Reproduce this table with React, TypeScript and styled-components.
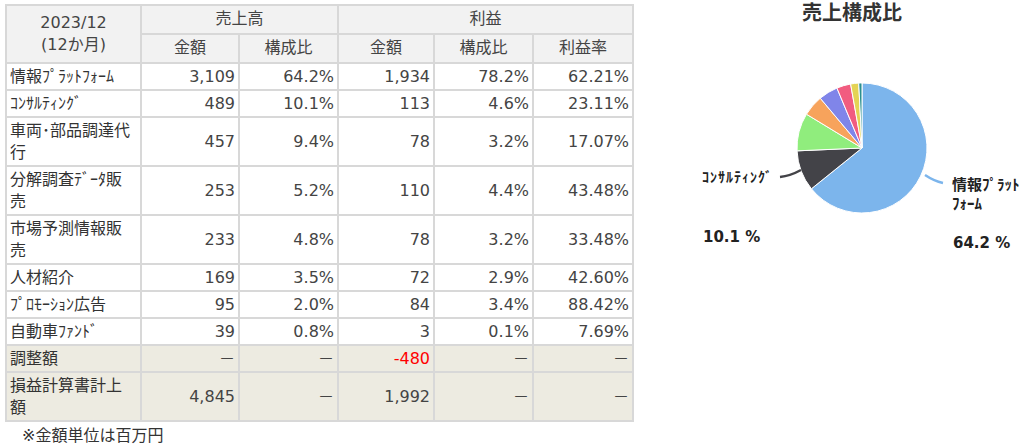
import React from 'react'
import styled, { createGlobalStyle } from 'styled-components'

const GlobalStyle = createGlobalStyle`
  body {
    margin: 0;
    background: #fff;
    font-family: "DejaVu Sans", "Noto Sans CJK JP", sans-serif;
    color: #333;
  }
`

const Page = styled.div`
  display: flex;
  align-items: flex-start;
  width: 1024px;
  height: 445px;
  overflow: hidden;
`

const TableBlock = styled.div`
  padding: 4px 0 0 5px;
  width: 627px;
`

const Table = styled.table`
  border-collapse: collapse;
  table-layout: fixed;
  width: 627px;
  font-size: 16px;
  line-height: 22px;
  border: 2px solid #d8d8d8;
`

const HeadCell = styled.th`
  background: #f2f2f2;
  border: 2px solid #d8d8d8;
  font-weight: normal;
  text-align: center;
  padding: 2px 4px 3px;
  color: #444;
`

const Row = styled.tr<{ $tone?: 'plain' | 'adjust' }>`
  background: ${(p) => (p.$tone === 'adjust' ? '#edebe1' : '#fff')};
`

const LabelCell = styled.td`
  border: 2px solid #d8d8d8;
  padding: 2px 4px 1px 3px;
  text-align: left;
  word-break: break-all;
`

const NumCell = styled.td<{ $neg?: boolean }>`
  border: 2px solid #d8d8d8;
  padding: 2px 3px 1px 4px;
  text-align: right;
  white-space: nowrap;
  color: ${(p) => (p.$neg ? '#ff0000' : '#444')};
`

const Note = styled.div`
  margin: 4px 0 0 17px;
  font-size: 16px;
  line-height: 20px;
  color: #333;
`

const ChartPanel = styled.div`
  margin-left: 48px;
  width: 344px;
  display: flex;
  flex-direction: column;
  align-items: center;
`

const ChartTitle = styled.div`
  font-size: 20px;
  font-weight: bold;
  line-height: 26px;
  height: 30px;
  color: #333;
  text-align: center;
`

interface Line {
  label: string
  cells: string[]
  tone?: 'plain' | 'adjust'
}

const DASH = '－'

const lines: Line[] = [
  { label: '情報ﾌﾟﾗｯﾄﾌｫｰﾑ', cells: ['3,109', '64.2%', '1,934', '78.2%', '62.21%'] },
  { label: 'ｺﾝｻﾙﾃｨﾝｸﾞ', cells: ['489', '10.1%', '113', '4.6%', '23.11%'] },
  { label: '車両･部品調達代行', cells: ['457', '9.4%', '78', '3.2%', '17.07%'] },
  { label: '分解調査ﾃﾞｰﾀ販売', cells: ['253', '5.2%', '110', '4.4%', '43.48%'] },
  { label: '市場予測情報販売', cells: ['233', '4.8%', '78', '3.2%', '33.48%'] },
  { label: '人材紹介', cells: ['169', '3.5%', '72', '2.9%', '42.60%'] },
  { label: 'ﾌﾟﾛﾓｰｼｮﾝ広告', cells: ['95', '2.0%', '84', '3.4%', '88.42%'] },
  { label: '自動車ﾌｧﾝﾄﾞ', cells: ['39', '0.8%', '3', '0.1%', '7.69%'] },
  { label: '調整額', cells: [DASH, DASH, '-480', DASH, DASH], tone: 'adjust' },
  { label: '損益計算書計上額', cells: ['4,845', DASH, '1,992', DASH, DASH], tone: 'adjust' },
]

const slices = [
  { value: 64.2, color: '#7cb5ec' },
  { value: 10.1, color: '#434348' },
  { value: 9.4, color: '#90ed7d' },
  { value: 5.2, color: '#f7a35c' },
  { value: 4.8, color: '#8085e9' },
  { value: 3.5, color: '#f15c80' },
  { value: 2.0, color: '#e4d354' },
  { value: 0.8, color: '#2b908f' },
]

const CX = 182
const CY = 118
const R = 65

const point = (deg: number) => {
  const rad = (deg * Math.PI) / 180
  return [CX + R * Math.sin(rad), CY - R * Math.cos(rad)]
}

const PieChart: React.FC = () => {
  const total = slices.reduce((s, x) => s + x.value, 0)
  let start = 0
  const paths = slices.map((s, i) => {
    const sweep = (s.value / total) * 360
    const [x1, y1] = point(start)
    const [x2, y2] = point(start + sweep)
    const large = sweep > 180 ? 1 : 0
    start += sweep
    return (
      <path
        key={i}
        d={`M${CX},${CY} L${x1},${y1} A${R},${R} 0 ${large} 1 ${x2},${y2} Z`}
        fill={s.color}
        stroke="#fff"
        strokeWidth={1}
        strokeLinejoin="round"
      />
    )
  })

  return (
    <svg width={344} height={230} viewBox="0 0 344 230">
      {paths}
      <path d="M100,147 Q110,146 121,140" fill="none" stroke="#434348" strokeWidth={2.5} />
      <path d="M245,145 Q254,151 263,153" fill="none" stroke="#7cb5ec" strokeWidth={2.5} />
      <g fontFamily='"DejaVu Sans", "Noto Sans CJK JP", sans-serif' fontWeight="bold" fill="#222">
        <text x={22} y={152} fontSize={14} letterSpacing={1}>ｺﾝｻﾙﾃｨﾝｸﾞ</text>
        <text x={23} y={212} fontSize={15}>10.1 %</text>
        <text x={272} y={160} fontSize={15}>情報ﾌﾟﾗｯﾄ</text>
        <text x={272} y={179} fontSize={15}>ﾌｫｰﾑ</text>
        <text x={273} y={218} fontSize={15}>64.2 %</text>
      </g>
    </svg>
  )
}

export default function App() {
  return (
    <Page>
      <GlobalStyle />
      <TableBlock>
        <Table>
          <colgroup>
            <col style={{ width: 135 }} />
            <col style={{ width: 98 }} />
            <col style={{ width: 99 }} />
            <col style={{ width: 96 }} />
            <col style={{ width: 99 }} />
            <col style={{ width: 100 }} />
          </colgroup>
          <thead>
            <tr>
              <HeadCell rowSpan={2}>
                2023/12
                <br />
                (12か月)
              </HeadCell>
              <HeadCell colSpan={2}>売上高</HeadCell>
              <HeadCell colSpan={3}>利益</HeadCell>
            </tr>
            <tr>
              <HeadCell>金額</HeadCell>
              <HeadCell>構成比</HeadCell>
              <HeadCell>金額</HeadCell>
              <HeadCell>構成比</HeadCell>
              <HeadCell>利益率</HeadCell>
            </tr>
          </thead>
          <tbody>
            {lines.map((l) => (
              <Row key={l.label} $tone={l.tone}>
                <LabelCell>{l.label}</LabelCell>
                {l.cells.map((c, i) => (
                  <NumCell key={i} $neg={c.startsWith('-')}>
                    {c}
                  </NumCell>
                ))}
              </Row>
            ))}
          </tbody>
        </Table>
        <Note>※金額単位は百万円</Note>
      </TableBlock>
      <ChartPanel>
        <ChartTitle>売上構成比</ChartTitle>
        <PieChart />
      </ChartPanel>
    </Page>
  )
}
